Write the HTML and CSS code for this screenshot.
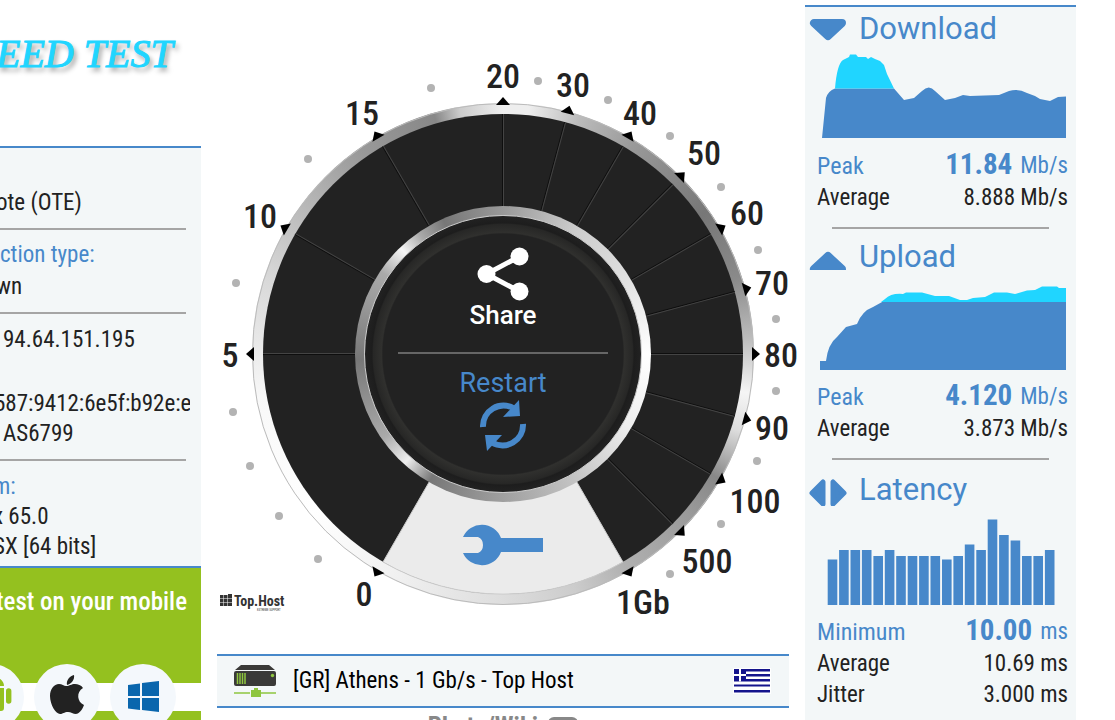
FILE: index.html
```html
<!DOCTYPE html>
<html lang="en">
<head>
<meta charset="utf-8">
<title>Speed Test</title>
<link rel="stylesheet" href="styles.css">
</head>
<body>
<div class="page">
  <aside class="info">
    <h1 class="brand">EED TEST</h1>
    <div class="info-panel">
      <section class="group group-first"><p class="cut">ote (OTE)</p></section>
      <section class="group spaced"><h2>ction type:</h2><p class="cut">wn</p></section>
      <section class="group"><p class="inset">94.64.151.195</p><p class="ip6">587:9412:6e5f:b92e:e8</p><p class="inset">AS6799</p></section>
      <section class="group group-last"><h2 class="cut-more">m:</h2><p class="cut-more">x 65.0</p><p class="cut-more">SX [64 bits]</p></section>
    </div>
    <div class="mobile">
      <p class="mobile-title">test on your mobile</p>
      <div class="stores">
        <a class="store" href="#" aria-label="Android"><svg viewBox="0 0 66 66"><path fill="#94c11f" d="M20 24h26v20a3 3 0 0 1-3 3h-20a3 3 0 0 1-3-3zM48 27a2.700 2.700 0 0 1 5.400 0v10a2.700 2.700 0 0 1-5.400 0zM20 22a13 10 0 0 1 26 0z"/></svg></a>
        <a class="store" href="#" aria-label="Apple"><svg viewBox="0 0 66 66"><path fill="#222" d="M33 21c-1-5 3-9 7-10 1 5-3 9-7 10zM32 22c4 0 5-2 9-2 3 0 6 1 8 4-7 4-6 14 1 17-2 6-6 9-8 9-3 0-5-2-8-2-4 0-5 2-8 2-4 0-10-9-10-18 0-7 4-12 9-12 3 0 5 2 7 2z"/></svg></a>
        <a class="store" href="#" aria-label="Windows"><svg viewBox="0 0 66 66"><path fill="#0a66ad" d="M18 21l12-1.500V32H18zM32 19l17-2v15H32zM18 34h12v12l-12-1.500zM32 34h17v14l-17-2z"/></svg></a>
      </div>
    </div>
  </aside>

  <main class="center">
    <div class="gauge">
      <div class="rim"></div>
      <svg class="scale" viewBox="217 54 572 600">
        <defs>
          <path id="mark" d="M503 97l7 8h-14z"/>
          <g id="spoke"><path stroke="#0e0e0e" d="M502.500 114v92"/><path stroke="#444" d="M503.500 114v92"/></g>
        </defs>
        <circle cx="503" cy="354" r="250.500" fill="none" stroke="#bbb" stroke-width="1"/>
        <circle cx="503" cy="354" r="240" fill="#222"/>
        <path fill="#ebebeb" stroke="#ccc" d="M503 354L383 562A240 240 0 0 0 623 562z"/>
        <g>
          <use href="#spoke" transform="rotate(-90 503 354)"/><use href="#spoke" transform="rotate(-60 503 354)"/>
          <use href="#spoke" transform="rotate(-30 503 354)"/><use href="#spoke"/>
          <use href="#spoke" transform="rotate(15 503 354)"/><use href="#spoke" transform="rotate(30 503 354)"/>
          <use href="#spoke" transform="rotate(45 503 354)"/><use href="#spoke" transform="rotate(60 503 354)"/>
          <use href="#spoke" transform="rotate(75 503 354)"/><use href="#spoke" transform="rotate(90 503 354)"/>
          <use href="#spoke" transform="rotate(105 503 354)"/><use href="#spoke" transform="rotate(120 503 354)"/>
          <use href="#spoke" transform="rotate(135 503 354)"/>
        </g>
        <g fill="#000">
          <use href="#mark" transform="rotate(-150 503 354)"/><use href="#mark" transform="rotate(-90 503 354)"/>
          <use href="#mark" transform="rotate(-60 503 354)"/><use href="#mark" transform="rotate(-30 503 354)"/>
          <use href="#mark"/><use href="#mark" transform="rotate(15 503 354)"/>
          <use href="#mark" transform="rotate(30 503 354)"/><use href="#mark" transform="rotate(45 503 354)"/>
          <use href="#mark" transform="rotate(60 503 354)"/><use href="#mark" transform="rotate(75 503 354)"/>
          <use href="#mark" transform="rotate(90 503 354)"/><use href="#mark" transform="rotate(105 503 354)"/>
          <use href="#mark" transform="rotate(120 503 354)"/><use href="#mark" transform="rotate(135 503 354)"/>
          <use href="#mark" transform="rotate(150 503 354)"/>
        </g>
        <g fill="#b3b3b3">
          <circle cx="236" cy="283" r="4"/><circle cx="308" cy="159" r="4"/><circle cx="431" cy="88" r="4"/>
          <circle cx="538" cy="81" r="4"/><circle cx="608" cy="100" r="4"/><circle cx="670" cy="136" r="4"/>
          <circle cx="721" cy="187" r="4"/><circle cx="758" cy="250" r="4"/><circle cx="776" cy="319" r="4"/>
          <circle cx="776" cy="391" r="4"/><circle cx="757" cy="461" r="4"/><circle cx="721" cy="524" r="4"/>
          <circle cx="670" cy="574" r="4"/><circle cx="318" cy="559" r="4"/><circle cx="279" cy="516" r="4"/>
          <circle cx="250" cy="466" r="4"/><circle cx="233" cy="412" r="4"/>
        </g>
        <g class="labels">
          <text x="364" y="606">0</text><text x="230" y="367">5</text><text x="260" y="228">10</text>
          <text x="362" y="125">15</text><text x="503" y="88">20</text><text x="573" y="97">30</text>
          <text x="640" y="125">40</text><text x="704" y="165">50</text><text x="747" y="225">60</text>
          <text x="772" y="295">70</text><text x="781" y="367">80</text><text x="772" y="440">90</text>
          <text x="755" y="513">100</text><text x="707" y="573">500</text><text x="643" y="614">1Gb</text>
        </g>
        <g fill="#333">
          <path d="M220 595h3.500v3.500h-3.500zM224 595h3.500v3.500h-3.500zM228 594h4v4.500h-4zM220 599h3.500v3.500h-3.500zM224 599h3.500v3.500h-3.500zM228 599h4v3.500h-4zM220 603h3.500v3h-3.500zM224 603h3.500v3h-3.500zM228 603h4v3h-4z"/>
          <text class="host" x="234" y="606">Top.Host</text>
          <text class="host-sub" x="257" y="611">EXTREME SUPPORT</text>
        </g>
      </svg>
      <div class="hub">
        <div class="hub-face">
          <button class="hub-btn share" type="button">
            <svg width="52" height="54" viewBox="0 0 52 54"><g fill="#fff"><circle cx="9.500" cy="27" r="9"/><circle cx="42.500" cy="9.500" r="9"/><circle cx="42.500" cy="44.500" r="9"/></g><path d="M42.500 9.500l-33 17.500 33 17.500" fill="none" stroke="#fff" stroke-width="5"/></svg>
            <span>Share</span>
          </button>
          <hr class="hub-line">
          <button class="hub-btn restart" type="button">
            <span>Restart</span>
            <svg width="48" height="52" viewBox="0 0 48 52"><g fill="none" stroke="#4788ca" stroke-width="6"><path d="M4 28a20.500 20.500 0 0 1 31-18.500"/><path d="M44 25a20.500 20.500 0 0 1-31 18.500"/></g><path fill="#4788ca" d="M40 1l1 16-17 1zM8 52l-2-16h17z"/></svg>
          </button>
        </div>
      </div>
      <button class="settings" type="button" aria-label="Settings">
        <svg width="82" height="44" viewBox="0 0 82 44"><path fill="#4788ca" d="M1 14A20.500 20.500 0 0 1 39 15H81V29H39A20.500 20.500 0 0 1 1 30H16Q21 28 21 22T16 14Z"/></svg>
      </button>
    </div>
    <button class="server" type="button">
      <svg width="44" height="34" viewBox="0 0 44 34"><path fill="#3a3a38" d="M8 1h28l6 5H2zM3 7h38q2 0 2 2v11q0 2-2 2H3q-2 0-2-2V9q0-2 2-2z"/><path stroke="#8fc63f" stroke-width="1.500" d="M4.500 9v11M7 9v11M9.500 9v11M12 9v11M1 29h16M28 29h15"/><circle cx="39.500" cy="11.500" r="1.700" fill="#8fc63f"/><path fill="#8fc63f" d="M18 26h3v-2h4v2h3v7H18z"/></svg>
      <span class="server-name">[GR] Athens - 1 Gb/s - Top Host</span>
      <svg class="flag" width="38" height="26" viewBox="0 0 38 26"><path fill="#fff" d="M0 0h38v26H0z"/><path fill="#14148c" d="M1 1h36v2.500H1zM13 6h24v2.500H13zM13 11h24v2.500H13zM1 16.500h36v2H1zM1 22h36v2.500H1zM1 1h12v12.500H1z"/><path stroke="#fff" stroke-width="2" d="M7 1v12.500M1 7h12"/></svg>
    </button>
    <div class="below"><span>Photo/Wiki</span><i class="toggle"></i></div>
  </main>

  <aside class="results">
    <section class="metric">
      <h2><svg width="40" height="26" viewBox="0 0 40 26"><path d="M6 7h28L20 20z"/></svg>Download</h2>
      <svg class="chart chart-down" viewBox="805 49 271 90" preserveAspectRatio="none">
        <path fill="#4788ca" d="M822 138L826 98Q828 91 835 88.500H894L904 100 914 98 922 91Q929 84 935 91L945 100 955 98 963 95 970 96 999 95 1009 91Q1018 88 1027 93L1035 96 1040 99 1050 101 1058 97 1066 96.500V138z"/>
        <path fill="#20d5ff" d="M835 88.500Q837 64 843 60L849 57 850 54.500H856L858 57H866L868 59 871 57 875 59 880 61 884 65 887 74 894 88.500z"/>
      </svg>
      <dl>
        <div class="row lead"><dt>Peak</dt><dd><b>11.84</b><span>Mb/s</span></dd></div>
        <div class="row"><dt>Average</dt><dd>8.888 Mb/s</dd></div>
      </dl>
      <hr>
    </section>
    <section class="metric">
      <h2><svg width="40" height="26" viewBox="0 0 40 26"><path d="M6 25h28L20 12z"/></svg>Upload</h2>
      <svg class="chart chart-up" viewBox="805 278 271 93" preserveAspectRatio="none">
        <path fill="#4788ca" d="M820 371V362H826Q828 345 837 338L846 328 857 325Q862 312 873 308L883 302.500H1066V371z"/>
        <path fill="#20d5ff" d="M881 303L885 300Q891 294 903 295L906 293.500H922L935 297 949 297 960 301 967 301 973 299 985 298 994 293.500H1007L1015 295 1027 291.500 1035 291 1042 287.500H1057L1059 289H1066V303z"/>
      </svg>
      <dl>
        <div class="row lead"><dt>Peak</dt><dd><b>4.120</b><span>Mb/s</span></dd></div>
        <div class="row"><dt>Average</dt><dd>3.873 Mb/s</dd></div>
      </dl>
      <hr>
    </section>
    <section class="metric">
      <h2><svg width="40" height="32" viewBox="0 0 40 32"><path d="M15 8v22L4 19zM25 8v22L36 19z"/></svg>Latency</h2>
      <svg class="chart chart-lat" viewBox="805 511 271 95" preserveAspectRatio="none">
        <path stroke="#4788ca" stroke-width="9.600" d="M832.500 606V560.500M843.900 606V551M855.300 606V551M866.700 606V551M878.200 606V557M889.600 606V551M901 606V557M912.500 606V557M923.900 606V557M935.300 606V557M946.800 606V560.500M958.200 606V557M969.600 606V545.500M981.100 606V551M992.500 606V520.500M1003.900 606V536M1015.400 606V541.500M1026.800 606V557M1038.200 606V557M1049.700 606V551"/>
      </svg>
      <dl>
        <div class="row lead"><dt>Minimum</dt><dd><b>10.00</b><span>ms</span></dd></div>
        <div class="row"><dt>Average</dt><dd>10.69 ms</dd></div>
        <div class="row"><dt>Jitter</dt><dd>3.000 ms</dd></div>
      </dl>
    </section>
  </aside>
</div>
</body>
</html>
```

FILE: styles.css
```css
:root {
  --blue: #4788ca;
  --ink: #222;
  --panel: #f3f7f8;
  --green: #94c11f;
  --narrow: "Roboto Condensed", Roboto, sans-serif;
}
* { box-sizing: border-box; }
body, h1, h2, p, dl, dd { margin: 0; }
body {
  background: #fff;
  color: var(--ink);
  font: 23px/30px var(--narrow);
  overflow: hidden;
}
button { border: 0; padding: 0; background: none; font: inherit; color: inherit; cursor: pointer; }
hr { border: 0; height: 2px; background: #a5a5a5; margin: 0; }
svg { display: block; flex: none; }

.page {
  display: grid;
  grid-template-columns: 201px minmax(0, 1fr) 271px;
  gap: 16px;
  height: 100vh;
  padding-right: 39px;
}

.info { display: flex; flex-direction: column; min-width: 0; overflow: hidden; }
.brand {
  height: 146px;
  padding-top: 34px;
  font: italic 400 40px/40px "Liberation Serif", serif;
  color: #20d5ff;
  -webkit-text-stroke: 1px #20d5ff;
  text-shadow: 3px 4px 5px rgba(0, 0, 0, .4);
  text-indent: -4px;
  white-space: nowrap;
}
.info-panel {
  background: var(--panel);
  border-top: 2px solid var(--blue);
  border-bottom: 2px solid var(--blue);
  white-space: nowrap;
}
.group { margin-right: 15px; padding: 11px 0 10px; border-bottom: 2px solid #a5a5a5; }
.group h2 { font: inherit; color: var(--blue); }
.group-first { padding-top: 40px; }
.spaced { display: grid; gap: 2px; padding-top: 10px; }
.group-last { border: 0; padding-bottom: 4px; }
.inset { padding-left: 3px; }
.cut { text-indent: -4px; }
.cut-more { text-indent: -7px; }
.ip6 { margin-top: 34px; margin-right: -4px; text-indent: -6px; overflow: hidden; }

.mobile { flex: 1; background: var(--green); }
.mobile-title {
  height: 115px;
  padding: 19px 12px 0 0;
  color: #fff;
  font-size: 25px;
  font-weight: 500;
  text-indent: -4px;
  white-space: nowrap;
}
.stores {
  display: flex;
  align-items: center;
  justify-content: flex-end;
  gap: 10px;
  height: 28px;
  padding-right: 25px;
  background: #fff;
}
.store { flex: none; width: 66px; height: 66px; border-radius: 50%; background: #f4f8fc; }

.center { padding-top: 54px; min-width: 0; }
.gauge { display: grid; place-items: center; }
.gauge > * { grid-area: 1 / 1; }
.scale { width: 100%; overflow: visible; }
.labels {
  font: 500 34px var(--narrow);
  fill: var(--ink);
  text-anchor: middle;
}
.host { font: 700 14px var(--narrow); }
.host-sub { font: 3px var(--narrow); }
.rim {
  width: 87.800%;
  aspect-ratio: 1;
  border-radius: 50%;
  background: conic-gradient(#eee 0deg, #eee 6deg, #bbb 18deg, #999 32deg, #777 55deg, #8a8a8a 72deg, #bbb 86deg, #f5f5f5 99deg, #ddd 108deg, #888 120deg, #999 130deg, #b0b0b0 150deg, #ccc 163deg, #ddd 180deg, #f0f0f0 205deg, #fff 230deg, #f8f8f8 260deg, #e8e8e8 273deg, #d8d8d8 288deg, #bbb 305deg, #999 325deg, #888 344deg, #ccc 350deg, #eee 360deg);
}
.hub {
  width: 51.700%;
  aspect-ratio: 1;
  padding: 9px;
  border-radius: 50%;
  background: conic-gradient(#999 0deg, #ccc 30deg, #ddd 55deg, #fff 90deg, #eee 120deg, #c4c4c4 150deg, #999 185deg, #777 210deg, #eee 222deg, #aaa 235deg, #777 268deg, #999 290deg, #aaa 304deg, #f5f5f5 316deg, #aaa 325deg, #777 336deg, #999 360deg);
}
.hub-face {
  display: flex;
  flex-direction: column;
  align-items: center;
  height: 100%;
  padding-top: 31px;
  border: 1px solid #ccc;
  border-radius: 50%;
  background: radial-gradient(closest-side, #222 87%, #30302e 88%, #272726 94%, #1d1d1d 95%, #222 100%);
}
.hub-btn { display: flex; flex-direction: column; align-items: center; font: 27px/28px Roboto, sans-serif; }
.share { color: #fff; font-size: 26px; font-weight: 500; }
.restart { color: var(--blue); gap: 2px; }
.hub-line { width: 76%; margin: 23px 0 15px; background: #666; }
.settings { align-self: end; margin-bottom: 87px; }

.server {
  display: flex;
  align-items: center;
  gap: 16px;
  width: 100%;
  height: 54px;
  padding: 0 18px 0 16px;
  background: var(--panel);
  border: solid var(--blue);
  border-width: 2px 0;
  color: #000;
}
.server-name { flex: 1; text-align: left; white-space: nowrap; }
.below {
  display: flex;
  justify-content: center;
  gap: 10px;
  padding-top: 4px;
  color: #888;
  font-size: 25px;
  font-weight: 700;
}
.toggle { width: 30px; height: 20px; margin-top: 5px; border: 4px solid #888; border-radius: 6px; }

.results { align-self: start; height: calc(100% - 5px); margin-top: 5px; border-top: 2px solid var(--blue); background: var(--panel); }
.metric { padding-top: 8px; }
.metric:first-child { padding-top: 2px; }
.metric:last-child { padding-top: 10px; }
.metric h2 { display: flex; align-items: center; gap: 11px; padding-left: 3px; color: var(--blue); font: 400 31px/40px Roboto, sans-serif; }
.metric h2 path { fill: var(--blue); stroke: var(--blue); stroke-width: 8px; stroke-linejoin: round; }
.metric:last-child h2 path { stroke-width: 5px; }
.chart { width: 100%; margin-bottom: 7px; }
.chart-down { height: 90px; }
.chart-up { height: 93px; }
.chart-lat { height: 95px; }
.metric dl { padding: 0 8px 0 12px; }
.row { display: flex; justify-content: space-between; align-items: baseline; height: 31px; line-height: 32px; white-space: nowrap; }
.lead { height: 33px; color: var(--blue); margin-bottom: 3px; }
.lead dt { font-size: 24px; }
.lead dd { display: flex; align-items: center; gap: 8px; }
.lead b { font-size: 29px; }
.lead span { padding-top: 4px; }
.metric hr { width: 80%; margin: 14px auto 0; }
```
